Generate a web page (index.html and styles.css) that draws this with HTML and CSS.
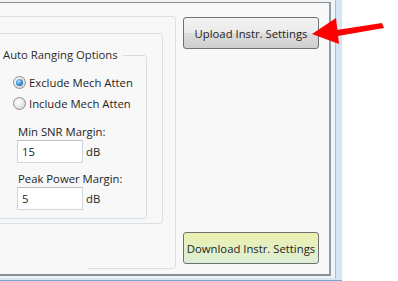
FILE: index.html
```html
<!DOCTYPE html>
<html lang="en">
<head>
  <meta charset="UTF-8">
  <title>Instrument Settings</title>
  <meta name="viewport" content="width=device-width, initial-scale=1">
  <link rel="stylesheet" href="styles.css">
</head>
<body>

<div class="chrome">
  <div class="frame">
    <div class="client">

      <div class="outer-panel">
        <div class="inner-panel">
          <div class="group">
            <div class="group-title">Auto Ranging Options</div>

            <div class="radio-row first">
              <span class="radio checked"></span>
              <span>Exclude Mech Atten</span>
            </div>
            <div class="radio-row">
              <span class="radio"></span>
              <span>Include Mech Atten</span>
            </div>

            <div class="field-label snr">Min SNR Margin:</div>
            <div class="field">
              <div class="textbox">15</div>
              <span class="unit">dB</span>
            </div>

            <div class="field-label peak">Peak Power Margin:</div>
            <div class="field">
              <div class="textbox">5</div>
              <span class="unit">dB</span>
            </div>
          </div>
        </div>
      </div>

      <div class="actions">
        <button class="btn">Upload Instr. Settings</button>
        <button class="btn btn-download">Download Instr. Settings</button>
      </div>

    </div>
  </div>
</div>

<!-- red pointer arrow -->
<svg class="arrow" width="398" height="281" viewBox="0 0 398 281">
  <polygon points="330,31 382,23 384,28 332,37" fill="#ff0000"/>
  <polygon points="312,34 336,18 339,44" fill="#ff0000"/>
</svg>

</body>
</html>
```

FILE: styles.css
```css
body {
  margin: 0;
  background: white;
  font-family: 'Open Sans', 'Liberation Sans', sans-serif;
  font-size: 11.3px;
  color: #1e1e1e;
  width: 398px;
  height: 281px;
  overflow: hidden;
  position: relative;
}
.chrome {
  width: 342px;
  height: 281px;
  box-sizing: border-box;
  background: #d7e5f3;
  border-bottom: 1px solid #7aa5cf;
}
.frame {
  width: 336px;
  height: 278px;
  box-sizing: border-box;
  padding-top: 2px;
  background: #f1f4f7;
  border-right: 1px solid #a6bed6;
}
.client {
  width: 331px;
  height: 274px;
  box-sizing: border-box;
  background: #f8f8f8;
  border-top: 1px solid #8c8c8c;
  border-right: 2px solid #8f9ba6;
  border-bottom: 2px solid #8a9097;
  display: flex;
  overflow: hidden;
}

/* panels */
.outer-panel {
  position: relative;
  flex: none;
  margin-top: 13px;
  margin-left: -12px;
  width: 188px;
  height: 253px;
  box-sizing: border-box;
  border: 1px solid #d9e1e8;
  border-radius: 3px;
  padding-top: 16px;
}
.outer-panel::after {
  content: "";
  position: absolute;
  left: -1px;
  bottom: -1px;
  width: 99px;
  height: 1px;
  background: #f8f8f8;
}
.inner-panel {
  width: 174px;
  height: 191px;
  box-sizing: border-box;
  border: 1px solid #d9e1e8;
  border-radius: 3px;
  padding-top: 21px;
}
.group {
  width: 157px;
  height: 164px;
  box-sizing: border-box;
  border: 1px solid #d5dde5;
  border-radius: 3px;
  padding-left: 9px;
}
.group-title {
  width: max-content;
  margin-top: -9px;
  line-height: 16px;
  padding: 0 5px 0 3px;
  background: #f8f8f8;
  color: #2b2b2b;
}

/* radio buttons */
.radio-row {
  display: flex;
  align-items: center;
  height: 16px;
  margin-top: 5px;
  padding-left: 13px;
}
.radio-row.first {
  margin-top: 11px;
}
.radio {
  width: 11px;
  height: 11px;
  margin-right: 3px;
  border: 1px solid #8e8f8f;
  border-radius: 50%;
  background: radial-gradient(circle at 40% 35%, #ffffff 0%, #eaeaea 45%, #c9c9c9 100%);
  position: relative;
}
.radio.checked::after {
  content: "";
  position: absolute;
  left: 2px;
  top: 2px;
  width: 7px;
  height: 7px;
  border-radius: 50%;
  background: radial-gradient(circle at 40% 35%, #b9e2ff 0%, #3c8fd0 50%, #1b5a8f 100%);
}

/* numeric fields */
.field-label {
  padding-left: 18px;
  line-height: 12px;
}
.field-label.snr {
  margin-top: 15px;
}
.field-label.peak {
  margin-top: 10px;
}
.field {
  display: flex;
  align-items: center;
  margin-top: 2px;
  padding-left: 17px;
}
.textbox {
  width: 66px;
  height: 23px;
  box-sizing: border-box;
  border: 1px solid #cfd6de;
  border-top-color: #b9c0c8;
  background: white;
  padding-left: 4px;
  line-height: 21px;
}
.unit {
  margin-left: 3px;
}

/* buttons */
.actions {
  flex: none;
  display: flex;
  flex-direction: column;
  justify-content: space-between;
  margin-left: 7px;
  padding: 14px 0 10px;
}
.btn {
  width: 136px;
  height: 32px;
  border: 1px solid #707070;
  border-radius: 3px;
  background: linear-gradient(#f2f2f2 0%, #ebebeb 50%, #dddddd 50%, #cfcfcf 100%);
  font-family: inherit;
  font-size: 11.3px;
  color: #1e1e1e;
  padding: 0;
  white-space: nowrap;
}
.btn-download {
  background: linear-gradient(#ecf1b0 0%, #e3efc4 55%, #dceed8 100%);
}

.arrow {
  position: absolute;
  left: 0;
  top: 0;
}
```
